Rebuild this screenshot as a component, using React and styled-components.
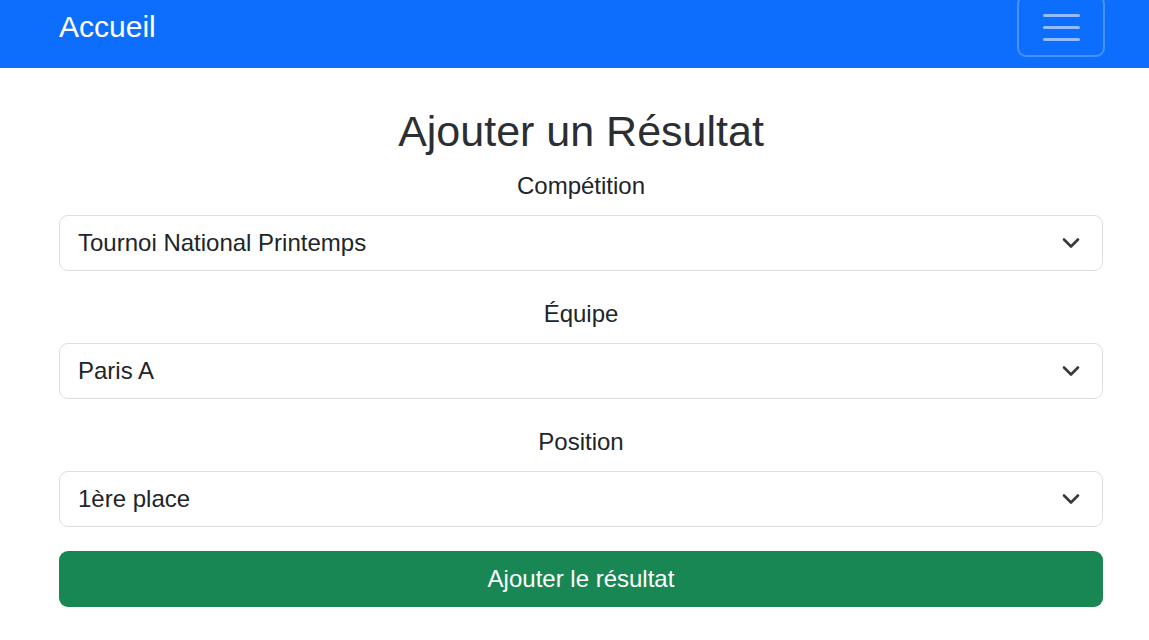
import React from "react";
import styled, { createGlobalStyle } from "styled-components";

const GlobalStyle = createGlobalStyle`
  * {
    box-sizing: border-box;
  }

  body {
    margin: 0;
    background: #fff;
    color: #212529;
    font-family: "Liberation Sans", Arial, sans-serif;
  }
`;

const Navbar = styled.nav`
  height: 68px;
  background-color: #0d6efd;
  overflow: hidden;
  display: flex;
  align-items: flex-start;
  justify-content: space-between;
  padding: 0 44px 0 59px;
`;

const Brand = styled.a`
  color: #fff;
  font-size: 30px;
  line-height: 1;
  text-decoration: none;
  margin-top: 12px;
`;

const Toggler = styled.button`
  width: 88px;
  height: 62px;
  margin-top: -5px;
  border: 2px solid rgba(255, 255, 255, 0.25);
  border-radius: 9px;
  background: transparent;
  display: flex;
  flex-direction: column;
  align-items: center;
  justify-content: center;
  gap: 9px;
  padding: 3px 0 0;
  cursor: pointer;
`;

const TogglerLine = styled.span`
  display: block;
  width: 37px;
  height: 3px;
  border-radius: 2px;
  background: rgba(255, 255, 255, 0.55);
`;

const Container = styled.main`
  padding: 38px 46px 0 59px;
`;

const Title = styled.h3`
  margin: 0 0 12px;
  font-size: 43px;
  font-weight: 400;
  line-height: 50px;
  text-align: center;
  color: #2b2f33;
`;

const Field = styled.div`
  margin-bottom: ${(p) => (p.$last ? "24px" : "25px")};
`;

const Label = styled.label`
  display: block;
  font-size: 24px;
  line-height: 36px;
  text-align: center;
  margin-bottom: 11px;
`;

const Select = styled.div`
  height: 56px;
  display: flex;
  align-items: center;
  justify-content: space-between;
  padding: 0 22px 0 18px;
  border: 1px solid #dcdfe3;
  border-radius: 9px;
  font-size: 24px;
  color: #212529;
  background: #fff;
  cursor: pointer;
`;

const Chevron = () => (
  <svg width="18" height="12" viewBox="0 0 18 12" fill="none">
    <path
      d="M2 2.5l7 7 7-7"
      stroke="#343a40"
      strokeWidth="2.6"
      strokeLinecap="round"
      strokeLinejoin="round"
    />
  </svg>
);

const SubmitButton = styled.button`
  display: block;
  width: 100%;
  height: 56px;
  border: none;
  border-radius: 9px;
  background-color: #198754;
  color: #fff;
  font-family: inherit;
  font-size: 24px;
  cursor: pointer;

  &:hover {
    background-color: #157347;
  }
`;

const fields = [
  { label: "Compétition", value: "Tournoi National Printemps" },
  { label: "Équipe", value: "Paris A" },
  { label: "Position", value: "1ère place" },
];

const App = () => {
  return (
    <>
      <GlobalStyle />
      <Navbar>
        <Brand href="#">Accueil</Brand>
        <Toggler aria-label="Menu">
          <TogglerLine />
          <TogglerLine />
          <TogglerLine />
        </Toggler>
      </Navbar>
      <Container>
        <Title>Ajouter un Résultat</Title>
        {fields.map((f, i) => (
          <Field key={f.label} $last={i === fields.length - 1}>
            <Label>{f.label}</Label>
            <Select>
              <span>{f.value}</span>
              <Chevron />
            </Select>
          </Field>
        ))}
        <SubmitButton type="submit">Ajouter le résultat</SubmitButton>
      </Container>
    </>
  );
};

export default App;
